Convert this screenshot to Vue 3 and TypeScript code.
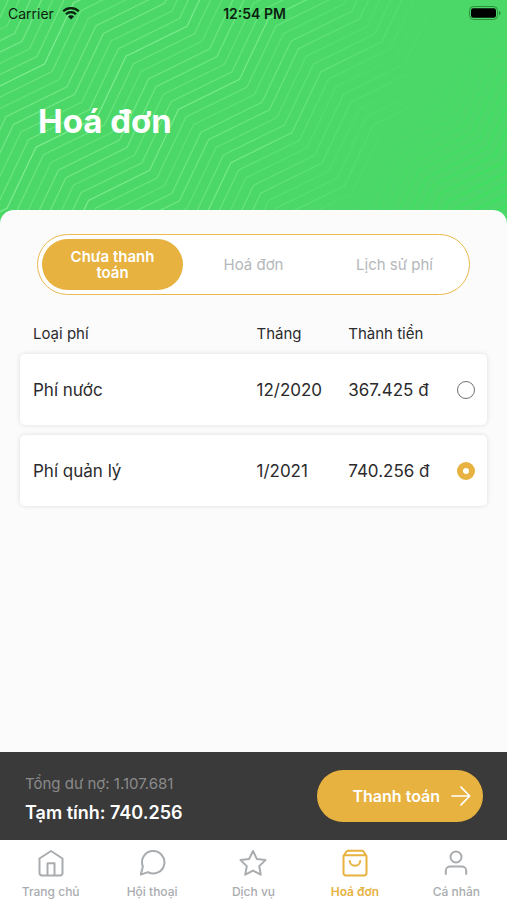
<script setup lang="ts">
import { computed, ref } from 'vue'

interface Fee {
  id: string
  name: string
  month: string
  amount: string
}

const tabs = ['Chưa thanh toán', 'Hoá đơn', 'Lịch sử phí']
const activeTab = ref(0)

const fees: Fee[] = [
  { id: 'water', name: 'Phí nước', month: '12/2020', amount: '367.425' },
  { id: 'management', name: 'Phí quản lý', month: '1/2021', amount: '740.256' },
]
const selected = ref('management')
const subtotal = computed(() => fees.find((f) => f.id === selected.value)?.amount ?? '0')

// Stepped lines of the header: a shallow run followed by a steep one.
const lines = Array.from({ length: 64 }, (_, i) => {
  const n = i - 22
  let x = 111 + n * 7.5 - 90 * 5
  let y = 41 + n * 7.6 + 91 * 5
  const points: string[] = []
  for (let k = 0; k < 11; k++) {
    points.push(`${x},${y}`, `${x + 61},${y - 30}`)
    x += 90
    y -= 91
  }
  return { points: points.join(' '), opacity: [0.75, 0.5, 0.65, 0.95, 0.6, 0.45, 0.7][i % 7] }
})
</script>

<template>
  <div class="page">
    <header class="hero">
      <svg class="pattern" viewBox="0 0 507 230" preserveAspectRatio="xMinYMin slice" aria-hidden="true">
        <defs>
          <linearGradient id="fade" gradientUnits="userSpaceOnUse" x1="60" y1="60" x2="420" y2="170">
            <stop offset="0" stop-color="#8df09a" stop-opacity="0.85" />
            <stop offset="0.55" stop-color="#80f092" stop-opacity="0.8" />
            <stop offset="0.8" stop-color="#6ce882" stop-opacity="0.4" />
            <stop offset="1" stop-color="#5be273" stop-opacity="0" />
          </linearGradient>
          <linearGradient id="glow" gradientUnits="userSpaceOnUse" x1="400" y1="110" x2="490" y2="180">
            <stop offset="0" stop-color="#38e35b" stop-opacity="0" />
            <stop offset="1" stop-color="#38e35b" stop-opacity="0.7" />
          </linearGradient>
        </defs>
        <g fill="none" stroke="url(#fade)" stroke-width="1.2">
          <polyline v-for="(l, i) in lines" :key="i" :points="l.points" :opacity="l.opacity" />
        </g>
        <g fill="none" stroke="url(#glow)" stroke-width="2">
          <polyline v-for="(l, i) in lines" :key="i" :points="l.points" />
        </g>
      </svg>
      <div class="status">
        <span class="carrier">
          Carrier
          <svg width="18" height="14" viewBox="0 0 18 14" aria-hidden="true">
            <g fill="none" stroke="#0b1f10" stroke-width="2.2">
              <path d="M1.2 5.2a11.2 11.2 0 0 1 15.6 0" />
              <path d="M4 8.2a7.2 7.2 0 0 1 10 0" />
            </g>
            <path d="M9 13.4 6 10.4a4.2 4.2 0 0 1 6 0z" fill="#0b1f10" />
          </svg>
        </span>
        <span class="clock">12:54 PM</span>
        <svg class="battery" width="32" height="14" viewBox="0 0 32 14" aria-hidden="true">
          <rect x="0.5" y="0.5" width="28" height="13" rx="4" fill="none" stroke="#2c8f40" />
          <rect x="2" y="2.3" width="25" height="9.4" rx="2.2" fill="#000" />
          <path d="M30 5v4.4c1-.4 1.5-1.2 1.5-2.2S31 5.4 30 5z" fill="#2c8f40" />
        </svg>
      </div>
      <h1>Hoá đơn</h1>
    </header>

    <main class="sheet">
      <div class="tabs" role="tablist">
        <button
          v-for="(t, i) in tabs"
          :key="t"
          type="button"
          role="tab"
          :aria-selected="activeTab === i"
          :class="['tab', { active: activeTab === i }]"
          @click="activeTab = i"
        >
          {{ t }}
        </button>
      </div>

      <table class="fees">
        <thead>
          <tr>
            <th scope="col">Loại phí</th>
            <th scope="col">Tháng</th>
            <th scope="col">Thành tiền</th>
          </tr>
        </thead>
        <tbody>
          <tr v-for="f in fees" :key="f.id">
            <td><label :for="f.id">{{ f.name }}</label></td>
            <td>{{ f.month }}</td>
            <td>{{ f.amount }} đ</td>
            <td class="pick"><input :id="f.id" v-model="selected" type="radio" name="fee" :value="f.id" /></td>
          </tr>
        </tbody>
      </table>
    </main>

    <section class="summary">
      <div class="totals">
        <p class="debt">Tổng dư nợ: 1.107.681</p>
        <p class="subtotal">Tạm tính: {{ subtotal }}</p>
      </div>
      <button type="button" class="pay">
        Thanh toán
        <svg width="20" height="20" viewBox="0 0 20 20" aria-hidden="true">
          <path d="M1 10h17.5M10 1.200l8.700 8.800-8.700 8.800" fill="none" stroke="#fff" stroke-width="1.700" stroke-linecap="round" stroke-linejoin="round" />
        </svg>
      </button>
    </section>

    <nav class="nav">
      <a href="#home">
        <svg viewBox="0 0 28 28" aria-hidden="true">
          <path d="M2.500 9.500 14 2l11.500 7.500v14.700a2.300 2.300 0 0 1-2.300 2.300H4.800a2.300 2.300 0 0 1-2.300-2.300z" />
          <path d="M10.500 26V14.200h7V26" />
        </svg>
        Trang chủ
      </a>
      <a href="#chat">
        <svg viewBox="0 0 28 28" aria-hidden="true">
          <path d="M4.900 17.600 2.800 25.600 9.900 23.100A11.200 11.200 0 1 0 4.900 17.600z" />
        </svg>
        Hội thoại
      </a>
      <a href="#services">
        <svg viewBox="0 0 28 28" aria-hidden="true">
          <path d="m14 2 3.800 7.900 8.700 1.200-6.300 6 1.600 8.600L14 21.600l-7.800 4.100 1.600-8.600-6.300-6 8.700-1.200z" />
        </svg>
        Dịch vụ
      </a>
      <a href="#bills" class="current" aria-current="page">
        <svg viewBox="0 0 28 28" aria-hidden="true">
          <path d="M2.500 7 5.500 2.500Q6.100 1.700 7 1.700h14q.9 0 1.500.800L25.500 7v17.200a2.300 2.300 0 0 1-2.300 2.300H4.800a2.300 2.300 0 0 1-2.300-2.300zM3.200 6.200h21.600" />
          <path d="M8.800 12c.3 6.300 10.100 6.300 10.400 0" />
        </svg>
        Hoá đơn
      </a>
      <a href="#profile">
        <svg viewBox="0 0 28 28" aria-hidden="true">
          <circle cx="14" cy="8" r="5.500" />
          <path d="M3.800 25v-3.200c0-2.700 2-4.300 4.400-4.300h11.600c2.400 0 4.400 1.600 4.400 4.300V25" />
        </svg>
        Cá nhân
      </a>
    </nav>
  </div>
</template>

<style>
body {
  margin: 0;
}
</style>

<style scoped>
.page {
  display: flex;
  flex-direction: column;
  min-height: 100vh;
  background: #fbfbfb;
  color: #2b2b2d;
  font-family: Inter, 'Noto Sans', sans-serif;
}

button {
  border: 0;
  font-family: inherit;
  cursor: pointer;
}

.hero {
  position: relative;
  box-sizing: border-box;
  height: 230px;
  background: #4bd868;
  overflow: hidden;
}

.pattern {
  position: absolute;
  inset: 0;
  width: 100%;
  height: 100%;
}

.status {
  position: relative;
  display: grid;
  grid-template-columns: 1fr auto 1fr;
  align-items: center;
  height: 26px;
  padding: 0 6px 0 8px;
  color: #0b1f10;
  font-size: 14px;
}

.carrier {
  display: flex;
  align-items: center;
  gap: 8px;
}

.clock {
  font-weight: 600;
}

.battery {
  justify-self: end;
}

h1 {
  position: relative;
  margin: 75px 38px 0;
  color: #fff;
  font-size: 33px;
  line-height: 40px;
  font-weight: 700;
}

.sheet {
  position: relative;
  flex: 1;
  margin-top: -20px;
  padding: 24px 20px;
  border-radius: 14px 14px 0 0;
  background: #fbfbfb;
}

.tabs {
  display: grid;
  grid-template-columns: repeat(3, 1fr);
  margin: 0 17px;
  padding: 4px;
  border: 1px solid #eab94f;
  border-radius: 31px;
  background: #fff;
}

.tab {
  height: 51px;
  padding: 0 20px;
  border-radius: 26px;
  background: transparent;
  color: #b4b7ba;
  font-size: 15px;
  line-height: 16px;
}

.tab.active {
  background: #e7b23f;
  color: #fff;
  font-weight: 600;
}

.fees {
  display: block;
  margin-top: 23px;
}

.fees thead,
.fees tbody {
  display: grid;
  gap: 10px;
}

.fees tr {
  display: grid;
  grid-template-columns: 224fr 92fr 109fr 18px;
  align-items: center;
  padding: 0 12px 0 13px;
}

.fees th {
  padding: 0;
  text-align: left;
  font-size: 15px;
  line-height: 32px;
  font-weight: 400;
}

.fees td {
  padding: 0;
  font-size: 17px;
  line-height: 24px;
  white-space: nowrap;
}

.fees tbody {
  margin-top: 4px;
}

.fees tbody tr {
  height: 71px;
  border-radius: 5px;
  background: #fff;
  box-shadow: 0 0 5px rgba(0, 0, 0, 0.12);
}

.pick {
  display: flex;
}

.pick input {
  appearance: none;
  box-sizing: border-box;
  width: 18px;
  height: 18px;
  margin: 0;
  border: 1px solid #707070;
  border-radius: 50%;
  background: #fff;
}

.pick input:checked {
  border: 6px solid #e7b23f;
}

.summary {
  display: flex;
  align-items: center;
  justify-content: space-between;
  box-sizing: border-box;
  height: 88px;
  padding: 0 24px 0 25px;
  background: #3a3a3a;
  color: #fff;
}

.summary p {
  margin: 0;
}

.totals {
  padding-top: 6px;
}

.debt {
  color: #8b8b8b;
  font-size: 15px;
  line-height: 28px;
}

.subtotal {
  font-size: 18px;
  line-height: 30px;
  font-weight: 600;
}

.pay {
  display: flex;
  align-items: center;
  gap: 11px;
  height: 52px;
  padding: 0 12px 0 35px;
  border-radius: 26px;
  background: #e7b23f;
  color: #fff;
  font-size: 16px;
  font-weight: 600;
}

.nav {
  display: grid;
  grid-template-columns: repeat(5, 1fr);
  height: 60px;
  background: #fff;
}

.nav a {
  display: flex;
  flex-direction: column;
  align-items: center;
  gap: 7px;
  padding-top: 9px;
  color: #a9acaf;
  font-size: 12px;
  line-height: 16px;
  font-weight: 500;
  text-decoration: none;
}

.nav svg {
  width: 28px;
  height: 28px;
  fill: none;
  stroke: currentColor;
  stroke-width: 2;
  stroke-linejoin: round;
  stroke-linecap: round;
}

.nav .current {
  color: #e7b23f;
  font-weight: 600;
}
</style>
